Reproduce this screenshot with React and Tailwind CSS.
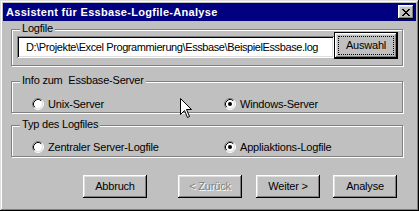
import React from "react";

function Radio({ checked }) {
  return (
    <svg width="12" height="12" viewBox="0 0 12 12" className="shrink-0">
      <circle cx="6" cy="6" r="5" fill="#fff" />
      <path d="M2.11 9.89 A5.5 5.5 0 0 1 9.89 2.11" fill="none" stroke="#808080" strokeWidth="1" />
      <path d="M9.89 2.11 A5.5 5.5 0 0 1 2.11 9.89" fill="none" stroke="#fff" strokeWidth="1" />
      <path d="M2.82 9.18 A4.5 4.5 0 0 1 9.18 2.82" fill="none" stroke="#000" strokeWidth="1" />
      <path d="M9.18 2.82 A4.5 4.5 0 0 1 2.82 9.18" fill="none" stroke="#dfdfdf" strokeWidth="1" />
      {checked && <circle cx="6" cy="6" r="2" fill="#000" />}
    </svg>
  );
}

function Group({ label, className, children }) {
  return (
    <div
      className={
        "relative w-[392px] border border-[#808080] shadow-[inset_1px_1px_#fff,1px_1px_#fff] " +
        className
      }
    >
      <span className="absolute left-[8px] top-[-8px] whitespace-pre bg-[#c0c0c0] px-[2px] leading-[13px]">
        {label}
      </span>
      {children}
    </div>
  );
}

function Button({ children, disabled }) {
  return (
    <button
      className={
        "flex h-[23px] w-[64px] items-center justify-center bg-[#c0c0c0] shadow-[inset_-1px_-1px_#000,inset_1px_1px_#fff,inset_-2px_-2px_#808080,inset_2px_2px_#dfdfdf] " +
        (disabled ? "text-[#808080] [text-shadow:1px_1px_0_#fff]" : "text-black")
      }
    >
      {children}
    </button>
  );
}

export default function App() {
  return (
    <div className="relative h-[211px] w-[419px] overflow-hidden bg-[#c0c0c0] font-['Liberation_Sans',Arial,sans-serif] text-[11px] tracking-[-0.2px] text-black">
      <div className="flex h-[211px] w-[419px] flex-col p-[3px] shadow-[inset_-1px_-1px_#000,inset_1px_1px_#dfdfdf,inset_-2px_-2px_#808080,inset_2px_2px_#fff]">
        {/* title bar */}
        <div className="flex h-[18px] items-center justify-between bg-[#000080] pl-[3px] pr-[2px]">
          <span className="text-[11px] font-bold tracking-[0.3px] text-white">Assistent für Essbase-Logfile-Analyse</span>
          <div className="flex h-[14px] w-[16px] items-center justify-center bg-[#c0c0c0] shadow-[inset_-1px_-1px_#000,inset_1px_1px_#fff,inset_-2px_-2px_#808080,inset_2px_2px_#dfdfdf]">
            <svg width="8" height="7" viewBox="0 0 8 7">
              <path d="M0 0h2v1h1v1h2v-1h1v-1h2v1h-1v1h-1v1h-1v1h1v1h1v1h1v1h-2v-1h-1v-1h-2v1h-1v1h-2v-1h1v-1h1v-1h1v-1h-1v-1h-1v-1h-1z" fill="#000" />
            </svg>
          </div>
        </div>

        <div className="flex flex-col pl-[8px]">
          <Group label="Logfile" className="mt-[8px] h-[37px]">
            <div className="flex items-start pl-[5px] pt-[2px]">
              <div className="mt-[4px] flex h-[22px] w-[317px] items-center overflow-hidden bg-white pl-[9px] shadow-[inset_1px_1px_#808080,inset_-1px_-1px_#fff,inset_2px_2px_#000,inset_-2px_-2px_#dfdfdf]">
                <span className="whitespace-nowrap tracking-[-0.4px]">D:\Projekte\Excel Programmierung\Essbase\BeispielEssbase.log</span>
              </div>
              <div className="h-[27px] w-[64px] border border-black">
                <div className="relative flex h-full w-full items-center justify-center shadow-[inset_-1px_-1px_#000,inset_1px_1px_#fff,inset_-2px_-2px_#808080,inset_2px_2px_#dfdfdf]">
                  <span className="absolute inset-[3px] border border-dotted border-black" />
                  <span className="leading-[13px]">Auswahl</span>
                </div>
              </div>
            </div>
          </Group>

          <Group label="Info zum  Essbase-Server" className="mt-[15px] h-[32px]">
            <div className="flex items-center pt-[14px]">
              <div className="ml-[20px] flex w-[192px] items-center gap-[4px]">
                <Radio />
                <span>Unix-Server</span>
              </div>
              <div className="flex items-center gap-[4px]">
                <Radio checked />
                <span>Windows-Server</span>
              </div>
            </div>
          </Group>

          <Group label="Typ des Logfiles" className="mt-[12px] h-[32px]">
            <div className="flex items-center pt-[13px]">
              <div className="ml-[20px] flex w-[192px] items-center gap-[4px]">
                <Radio />
                <span>Zentraler Server-Logfile</span>
              </div>
              <div className="flex items-center gap-[4px]">
                <Radio checked />
                <span>Appliaktions-Logfile</span>
              </div>
            </div>
          </Group>

          <div className="mt-[18px] flex">
            <div className="ml-[72px]">
              <Button>Abbruch</Button>
            </div>
            <div className="ml-[31px]">
              <Button disabled>&lt; Zurück</Button>
            </div>
            <div className="ml-[14px]">
              <Button>Weiter &gt;</Button>
            </div>
            <div className="ml-[13px]">
              <Button>Analyse</Button>
            </div>
          </div>
        </div>
      </div>

      {/* mouse cursor */}
      <svg width="13" height="21" viewBox="0 0 13 21" className="absolute left-[180px] top-[98px]">
        <path d="M0.5 0.5 L0.5 16.5 L4.5 12.5 L7.5 19.5 L9.5 18.5 L6.5 11.5 L11.5 11.5 Z" fill="#fff" stroke="#000" strokeWidth="1" />
      </svg>
    </div>
  );
}
